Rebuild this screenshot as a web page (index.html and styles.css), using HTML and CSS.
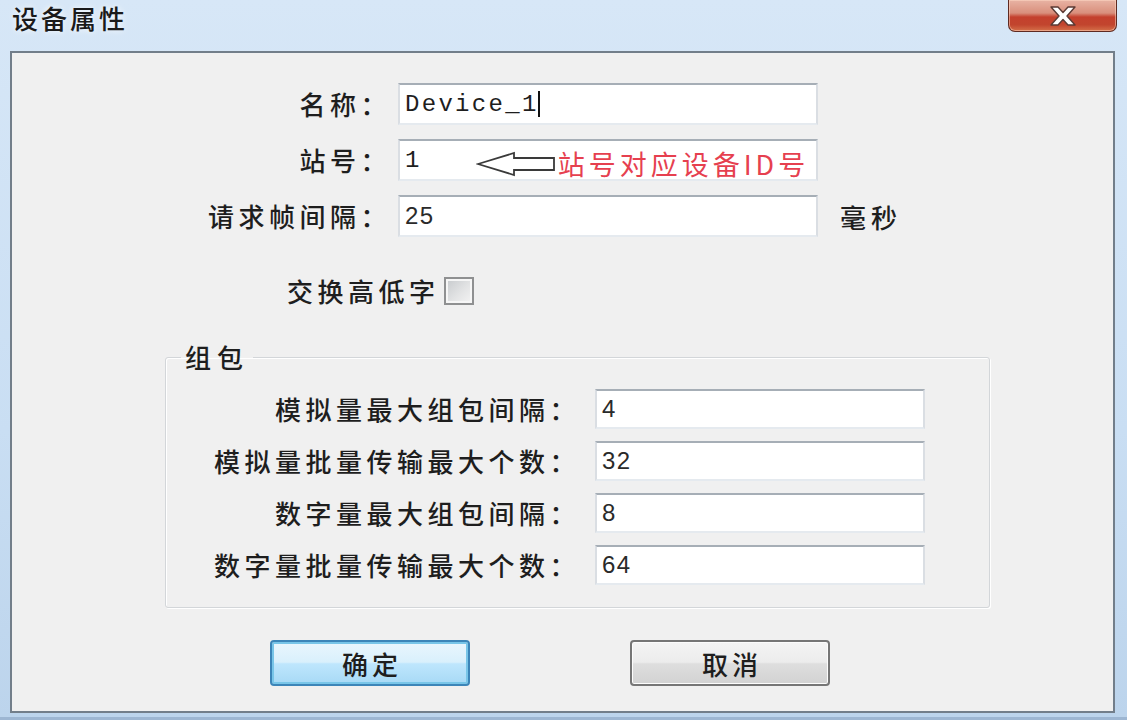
FILE: index.html
```html
<!DOCTYPE html>
<html lang="zh-CN">
<head>
<meta charset="utf-8">
<title>设备属性</title>
<link rel="stylesheet" href="styles.css">
</head>
<body>
<div class="window">
  <div class="titlebar">
    <div class="title">设备属性</div>
    <div class="spacer"></div>
    <div class="close">
      <svg width="32" height="24" viewBox="0 0 32 24">
        <path d="M4,3 L11,3 L16,8.5 L21,3 L28,3 L20,12 L28,21 L21,21 L16,15.5 L11,21 L4,21 L12,12 Z" fill="#ffffff" stroke="#5b3a34" stroke-width="1.4" stroke-linejoin="round"/>
      </svg>
    </div>
  </div>
  <div class="client">
    <div class="main-form">
      <div class="label">名称：</div>
      <div class="field"><span class="mono">Device_1</span><span class="caret"></span></div>
      <div></div>

      <div class="label">站号：</div>
      <div class="field">
        <span class="mono">1</span>
        <svg class="arrow" width="80" height="26" viewBox="0 0 80 26">
          <path d="M2,13 L38,2 L38,7 L78,7 L78,19 L38,19 L38,24 Z" fill="#ffffff" stroke="#3a3a3a" stroke-width="1.8" stroke-linejoin="miter"/>
        </svg>
        <span class="note">站号对应设备ID号</span>
      </div>
      <div></div>

      <div class="label">请求帧间隔：</div>
      <div class="field"><span class="sans">25</span></div>
      <div class="unit">毫秒</div>
    </div>

    <div class="check-row">
      <span class="check-label">交换高低字</span>
      <span class="checkbox"></span>
    </div>

    <fieldset class="group">
      <legend class="legend">组包</legend>
      <div class="group-form">
        <div class="label">模拟量最大组包间隔：</div>
        <div class="field small"><span class="sans">4</span></div>
        <div class="label">模拟量批量传输最大个数：</div>
        <div class="field small"><span class="sans">32</span></div>
        <div class="label">数字量最大组包间隔：</div>
        <div class="field small"><span class="sans">8</span></div>
        <div class="label">数字量批量传输最大个数：</div>
        <div class="field small"><span class="sans">64</span></div>
      </div>
    </fieldset>

    <div class="buttons">
      <div class="btn btn-default">确定</div>
      <div class="btn">取消</div>
    </div>
  </div>
</div>
</body>
</html>
```

FILE: styles.css
```css
html, body {
  margin: 0;
  padding: 0;
}

body {
  width: 1127px;
  height: 720px;
  overflow: hidden;
  font-family: "Noto Sans CJK SC", "Noto Sans", sans-serif;
  color: #222;
}

.window {
  width: 1127px;
  height: 720px;
  display: flex;
  flex-direction: column;
  background: linear-gradient(180deg, #d7e7f7 0%, #c9def3 60%, #bcd4ec 100%);
  box-sizing: border-box;
  border-bottom: 3px solid #9db6d2;
}

.titlebar {
  height: 51px;
  display: flex;
  align-items: flex-start;
  flex: none;
}

.title {
  padding: 3px 0 0 12px;
  font-size: 26px;
  line-height: 30px;
  letter-spacing: 3px;
  font-weight: 500;
  color: #1a1a1a;
  text-shadow: 0 0 6px rgba(255, 255, 255, 0.9);
}

.spacer {
  flex: 1;
}

.close {
  width: 109px;
  height: 32px;
  margin-right: 10px;
  box-sizing: border-box;
  border: 1px solid #5e2a22;
  border-top: none;
  border-radius: 0 0 7px 7px;
  background: linear-gradient(180deg, #e8b3a4 0%, #d98f7c 42%, #c4402d 55%, #c2452e 80%, #d4704a 100%);
  display: flex;
  align-items: center;
  justify-content: center;
  box-shadow: inset 0 0 0 1px rgba(255, 220, 200, 0.5);
}

.client {
  flex: 1;
  margin: 0 12px 4px 10px;
  border: 2px solid #727e8a;
  background: #f0f0f0;
  padding-top: 30px;
  box-sizing: border-box;
}

.main-form {
  display: grid;
  grid-template-columns: 379px 420px auto;
  grid-auto-rows: 42px;
  column-gap: 7px;
  row-gap: 14px;
  align-items: center;
}

.label {
  text-align: right;
  font-size: 26px;
  line-height: 30px;
  letter-spacing: 4.5px;
  font-weight: 500;
  color: #1e1e1e;
}

.field {
  height: 42px;
  box-sizing: border-box;
  background: #ffffff;
  border-top: 2px solid #a6aeb6;
  border-left: 2px solid #dadee3;
  border-right: 2px solid #dadee3;
  border-bottom: 2px solid #e5eaef;
  display: flex;
  align-items: center;
  padding-left: 5px;
  color: #222;
}

.field.small {
  height: 40px;
}

.mono {
  font-family: "Liberation Mono", monospace;
  font-size: 24px;
  letter-spacing: 2.3px;
  color: #1e1e1e;
}

.sans {
  font-family: "Liberation Sans", Arial, sans-serif;
  font-size: 24px;
  letter-spacing: 1.5px;
  color: #2a2a2a;
}

.caret {
  width: 2px;
  height: 26px;
  background: #111;
  margin-left: -1px;
}

.arrow {
  margin-left: 54px;
  margin-top: 8px;
  flex: none;
}

.note {
  margin-left: 2px;
  margin-top: 8px;
  font-size: 27px;
  line-height: 30px;
  letter-spacing: 4px;
  color: #e6404f;
  white-space: nowrap;
}

.unit {
  margin-left: 15px;
  font-size: 26px;
  letter-spacing: 5px;
  font-weight: 500;
  color: #1e1e1e;
}

.check-row {
  margin-top: 40px;
  padding-left: 275px;
  display: flex;
  align-items: center;
  gap: 4px;
  height: 28px;
}

.check-label {
  font-size: 26px;
  line-height: 30px;
  letter-spacing: 4.5px;
  font-weight: 500;
  color: #1e1e1e;
}

.checkbox {
  width: 30px;
  height: 28px;
  box-sizing: border-box;
  border: 2px solid #8f9091;
  box-shadow: inset 0 0 0 2px #f6f6f6;
  background: linear-gradient(135deg, #c6c9cc 0%, #e2e3e4 55%, #f4f4f4 100%);
}

.group {
  margin: 38px 0 0 153px;
  width: 825px;
  box-sizing: border-box;
  padding: 18px 0 22px 0;
  border: 1px solid #d3d6d9;
  border-radius: 3px;
  box-shadow: inset 1px 1px 0 #ffffff, 1px 1px 0 #ffffff;
  min-inline-size: 0;
}

.legend {
  margin-left: 15px;
  padding: 0 4px;
  font-size: 26px;
  line-height: 28px;
  letter-spacing: 6px;
  font-weight: 500;
  color: #1e1e1e;
}

.group-form {
  display: grid;
  grid-template-columns: 414px 330px;
  grid-auto-rows: 40px;
  column-gap: 15px;
  row-gap: 12px;
  align-items: center;
}

.buttons {
  margin-top: 32px;
  padding-left: 258px;
  display: flex;
  gap: 160px;
}

.btn {
  width: 200px;
  height: 46px;
  box-sizing: border-box;
  border: 2px solid #767676;
  border-radius: 4px;
  background: linear-gradient(180deg, #f4f4f4 0%, #ececec 48%, #dedede 52%, #d2d2d2 100%);
  box-shadow: inset 0 0 0 1px #fcfcfc;
  display: flex;
  align-items: center;
  justify-content: center;
  font-size: 26px;
  letter-spacing: 4px;
  font-weight: 500;
  color: #1e1e1e;
  padding-left: 4px;
}

.btn-default {
  border-color: #3c85b8;
  background: linear-gradient(180deg, #eaf6fd 0%, #d9f0fc 48%, #bee6fd 52%, #a7d9f5 100%);
  box-shadow: inset 0 0 0 2px #78c5e8;
}
```
